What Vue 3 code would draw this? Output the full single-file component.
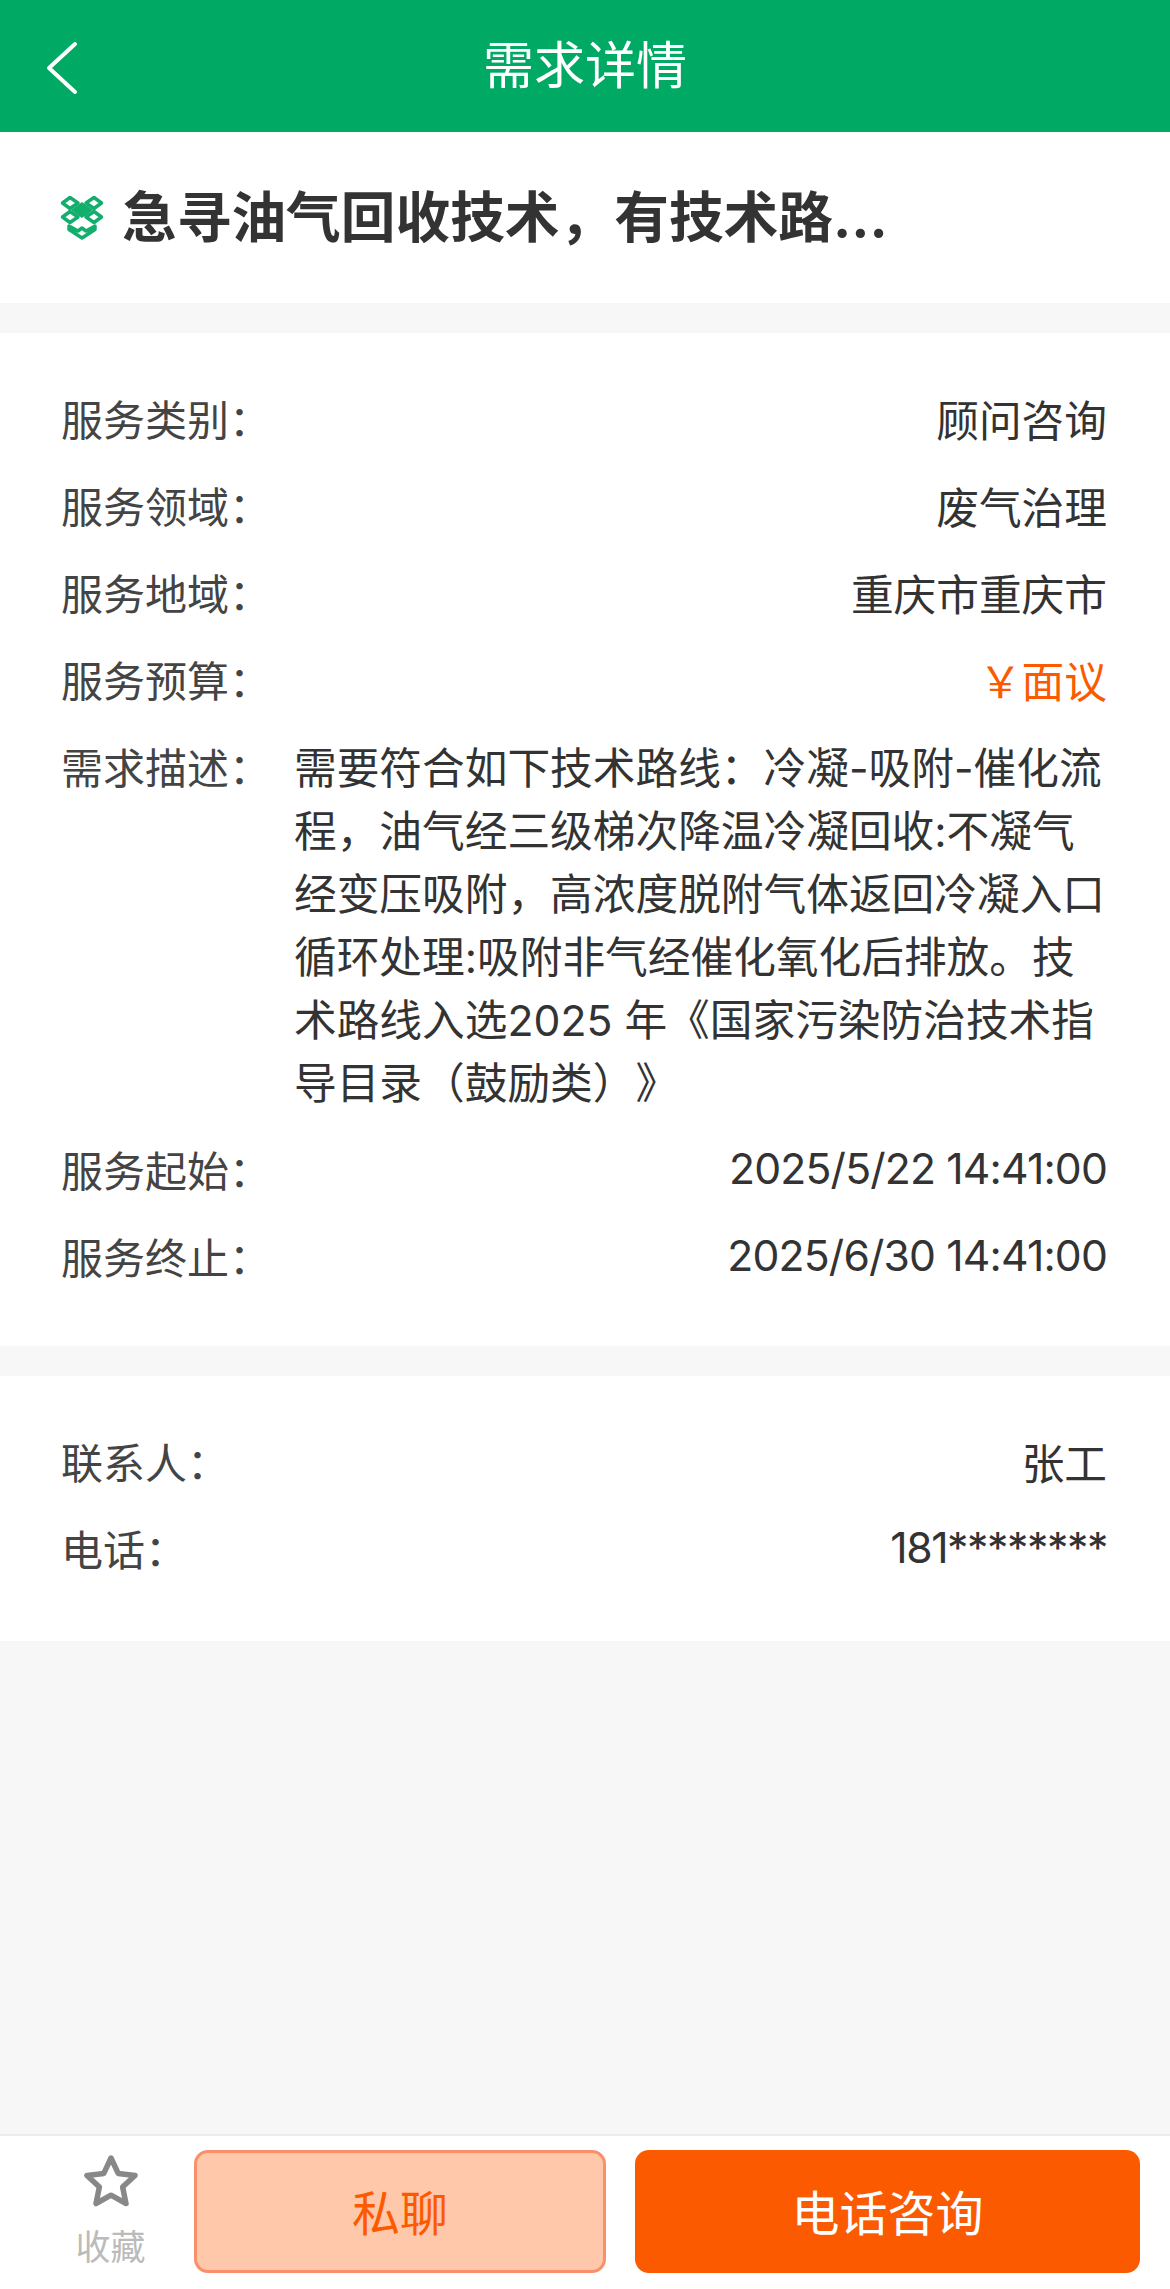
<template>
  <div class="page">
    <header class="nav">
      <svg class="back" viewBox="0 0 32 54" width="32" height="54">
        <path d="M29 3 L3 27 L29 51" fill="none" stroke="#fff" stroke-width="4" stroke-linecap="round" stroke-linejoin="round" />
      </svg>
      <span class="nav-title">需求详情</span>
    </header>

    <section class="title-card">
      <svg class="box-icon" viewBox="0 0 44 45" width="44" height="45">
        <g fill="none" stroke="#12ae6d" stroke-width="3.5" stroke-linejoin="round">
          <path d="M10 2.5 L18 8 L10 13.5 L2.5 8 Z" />
          <path d="M34 2.5 L41.5 8 L34 13.5 L26 8 Z" />
          <path d="M10 16.5 L18 22 L10 27.5 L2.5 22 Z" />
          <path d="M34 16.5 L41.5 22 L34 27.5 L26 22 Z" />
          <path d="M9 31 L9 34.5 L22 43 L35 34.5 L35 31 L26 36 L22 33 L18 36 Z" />
        </g>
        <path d="M22 7 L33 15 L22 23 L11 15 Z" fill="#12ae6d" />
      </svg>
      <h1 class="title">急寻油气回收技术，有技术路...</h1>
    </section>

    <section class="card first">
      <div v-for="row in serviceRows" :key="row.label" class="row" :class="{ long: row.long }">
        <span class="label">{{ row.label }}</span>
        <span class="value" :class="{ price: row.price, desc: row.long, num: row.num }">{{ row.value }}</span>
      </div>
    </section>

    <section class="card second">
      <div v-for="row in contactRows" :key="row.label" class="row">
        <span class="label">{{ row.label }}</span>
        <span class="value" :class="{ phone: row.phone }">{{ row.value }}</span>
      </div>
    </section>

    <footer class="bar">
      <div class="fav">
        <svg viewBox="0 0 58 56" width="58" height="56">
          <path d="M29 5 L36.2 20.4 L53 22.4 L40.6 33.9 L44 50.5 L29 42.2 L14 50.5 L17.4 33.9 L5 22.4 L21.8 20.4 Z" fill="none" stroke="#888" stroke-width="5.5" stroke-linejoin="round" />
        </svg>
        <span>收藏</span>
      </div>
      <button class="btn chat">私聊</button>
      <button class="btn call">电话咨询</button>
    </footer>
  </div>
</template>

<script setup>
const serviceRows = [
  { label: '服务类别：', value: '顾问咨询' },
  { label: '服务领域：', value: '废气治理' },
  { label: '服务地域：', value: '重庆市重庆市' },
  { label: '服务预算：', value: '￥面议', price: true },
  {
    label: '需求描述：',
    value: '需要符合如下技术路线：冷凝-吸附-催化流程，油气经三级梯次降温冷凝回收:不凝气经变压吸附，高浓度脱附气体返回冷凝入口循环处理:吸附非气经催化氧化后排放。技术路线入选2025 年《国家污染防治技术指导目录（鼓励类）》',
    long: true
  },
  { label: '服务起始：', value: '2025/5/22 14:41:00', num: true },
  { label: '服务终止：', value: '2025/6/30 14:41:00', num: true }
]

const contactRows = [
  { label: '联系人：', value: '张工' },
  { label: '电话：', value: '181********', phone: true }
]
</script>

<style>
html,
body {
  margin: 0;
  background: #f7f7f7;
}
</style>

<style scoped>
.page {
  display: flex;
  flex-direction: column;
  min-height: 100vh;
  background: #f7f7f7;
  color: #333;
  font-family: "Inter", "Noto Sans CJK SC", sans-serif;
  text-spacing-trim: space-all;
}

.nav {
  position: relative;
  display: flex;
  align-items: center;
  justify-content: center;
  box-sizing: border-box;
  height: 132px;
  padding-bottom: 8px;
  background: #00a964;
  color: #fff;
}

.back {
  position: absolute;
  left: 46px;
  top: 41px;
}

.nav-title {
  font-size: 51px;
  font-weight: 400;
}

.title-card {
  display: flex;
  align-items: center;
  gap: 18px;
  height: 171px;
  padding: 0 60px;
  background: #fff;
}

.box-icon {
  flex: none;
}

.title {
  margin: 0;
  font-size: 54.7px;
  font-weight: 700;
  line-height: 1.2;
  white-space: nowrap;
}

.card {
  margin-top: 30px;
  padding: 41px 63px 47px 61px;
  background: #fff;
}

.card.second {
  padding-bottom: 50px;
}

.row {
  display: flex;
  justify-content: space-between;
  align-items: center;
  min-height: 87px;
  font-size: 42.7px;
}

.row.long {
  align-items: flex-start;
  padding: 15px 0 10px;
}

.label {
  flex: none;
  width: 233px;
  color: #444;
  font-size: 42px;
  white-space: nowrap;
}

.row.long .label {
  line-height: 63px;
}

.value {
  text-align: right;
  white-space: nowrap;
}

.value.num {
  letter-spacing: -0.85px;
}

.value.phone {
  letter-spacing: -1.4px;
}

.value.price {
  color: #fc5a00;
}

.value.desc {
  flex: 1;
  text-align: left;
  white-space: normal;
  line-height: 63px;
}

.bar {
  display: flex;
  align-items: center;
  gap: 22px;
  margin-top: auto;
  height: 155px;
  padding: 0 30px 2px 49px;
  box-sizing: border-box;
  border-top: 2px solid #ececec;
  background: #fff;
}

.fav {
  display: flex;
  flex-direction: column;
  align-items: center;
  gap: 16px;
  flex: none;
  width: 123px;
  margin-top: -2px;
  font-size: 35px;
  line-height: 44px;
  color: #bbb;
}

.btn {
  height: 123px;
  box-sizing: border-box;
  padding-bottom: 4px;
  border-radius: 14px;
  font-family: inherit;
  font-size: 48px;
}

.chat {
  width: 412px;
  margin-right: 7px;
  border: 3px solid #f9906a;
  background: #ffc8ab;
  color: #fc5a00;
}

.call {
  flex: 1;
  border: none;
  background: #fc5a00;
  color: #fff;
}
</style>
